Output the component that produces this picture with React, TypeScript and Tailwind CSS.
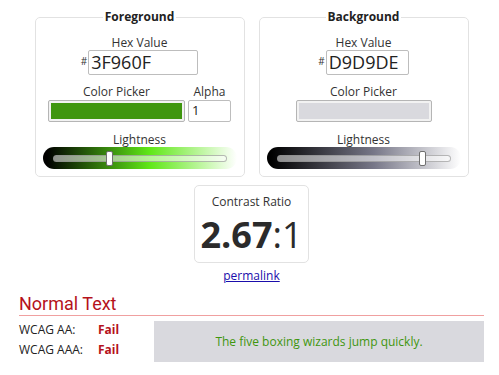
import React from "react";

const font = { fontFamily: '"Open Sans", "Liberation Sans", sans-serif' };

function Slider({ gradient, pos }: { gradient: string; pos: number }) {
  return (
    <div className={`w-[194px] h-[22px] rounded-full flex items-center px-[10px] ${gradient}`}>
      <div className="relative flex-1 h-[7px] rounded-full bg-white/55 border border-[#8a8a8a]/60">
        <div
          className="absolute top-[-5px] w-[7px] h-[15px] bg-white border border-[#6f6f6f] rounded-[2px]"
          style={{ left: `calc(${pos}% - 3px)` }}
        />
      </div>
    </div>
  );
}

function Panel({
  title,
  hex,
  inputW,
  swatch,
  pickerW,
  alpha,
  gradient,
  pos,
}: {
  title: string;
  hex: string;
  inputW: string;
  swatch: string;
  pickerW: string;
  alpha: boolean;
  gradient: string;
  pos: number;
}) {
  return (
    <fieldset className="border border-[#e2e2e2] rounded-[5px] w-[210px] h-[169px] flex flex-col items-center">
      <legend className="mx-auto px-[2px] font-bold text-[12px] leading-[18px] text-[#222]">{title}</legend>
      <div className="flex flex-col items-center w-full">
        <div className="mt-[9px] text-[12px] leading-[15px] text-[#333]">Hex Value</div>
        <div className="flex items-start">
          <span className="text-[10px] leading-[10px] mt-[6px] mr-[1px] text-[#333]">#</span>
          <div className={`${inputW} h-[25px] border border-[#bdbdbd] rounded-[2px] flex items-center pl-[2px] text-[18px] text-[#222]`}>
            {hex}
          </div>
        </div>
        <div className="flex items-end gap-[3px] mt-[9px]">
          <div className="flex flex-col items-center">
            <div className="text-[12px] leading-[15px] text-[#333] mb-[1px]">Color Picker</div>
            <div className={`${pickerW} h-[22px] border border-[#b5b5b5] rounded-[2px] p-[2px] bg-[#f2f2f2]`}>
              <div className={`w-full h-full ${swatch}`} />
            </div>
          </div>
          {alpha && (
            <div className="flex flex-col items-center">
              <div className="text-[12px] leading-[15px] text-[#333] mb-[1px]">Alpha</div>
              <div className="w-[43px] h-[22px] border border-[#bdbdbd] rounded-[2px] flex items-center pl-[3px] text-[13px] text-[#222]">
                1
              </div>
            </div>
          )}
        </div>
        <div className="mt-[10px] text-[12px] leading-[15px] text-[#333]">Lightness</div>
        <Slider gradient={gradient} pos={pos} />
      </div>
    </fieldset>
  );
}

export default function App() {
  return (
    <div className="w-[499px] h-[375px] overflow-hidden bg-white pt-[8px]" style={font}>
      <div className="flex justify-center gap-[14px] pl-[4px]">
        <Panel
          title="Foreground"
          hex="3F960F"
          inputW="w-[110px]"
          swatch="bg-[#3F960F]"
          pickerW="w-[137px]"
          alpha={true}
          gradient="bg-[linear-gradient(to_right,#000_2%,#60E817_55%,#fff_100%)]"
          pos={32.4}
        />
        <Panel
          title="Background"
          hex="D9D9DE"
          inputW="w-[83px]"
          swatch="bg-[#D9D9DE]"
          pickerW="w-[136px]"
          alpha={false}
          gradient="bg-[linear-gradient(to_right,#000_2%,#777788_55%,#fff_100%)]"
          pos={84}
        />
      </div>
      <div className="flex flex-col items-center mt-[8px] pl-[4px]">
        <div className="w-[115px] h-[78px] border border-[#e2e2e2] rounded-[5px] flex flex-col items-center pt-[8px]">
          <div className="text-[12px] leading-[16px] text-[#333]">Contrast Ratio</div>
          <div className="text-[36px] leading-[44px] text-[#2b2b2b] mt-[3px]">
            <span className="font-bold">2.67</span>
            <span>:1</span>
          </div>
        </div>
        <a href="#" className="mt-[5px] text-[12px] leading-[16px] text-[#1a0dab] underline">
          permalink
        </a>
      </div>
      <div className="pr-[15px] pl-[19px] mt-[9px]">
        <div
          className="text-[18px] leading-[21px] text-[#b5121b] border-b border-[#f0a0a0] pb-[1px]"
          style={{ fontFamily: 'Roboto, "Liberation Sans", sans-serif' }}
        >
          Normal Text
        </div>
        <div className="flex mt-[5px]">
          <div className="w-[135px] flex flex-col -mt-[1px]">
            <div className="flex text-[12px] leading-[20px] text-[#222]">
              <span className="w-[79px]">WCAG AA:</span>
              <span className="font-bold text-[#b5121b]">Fail</span>
            </div>
            <div className="flex text-[12px] leading-[20px] text-[#222]">
              <span className="w-[79px]">WCAG AAA:</span>
              <span className="font-bold text-[#b5121b]">Fail</span>
            </div>
          </div>
          <div className="flex-1 h-[41px] bg-[#D9D9DE] flex items-center justify-center text-[12px] text-[#3F960F]">
            The five boxing wizards jump quickly.
          </div>
        </div>
      </div>
    </div>
  );
}
